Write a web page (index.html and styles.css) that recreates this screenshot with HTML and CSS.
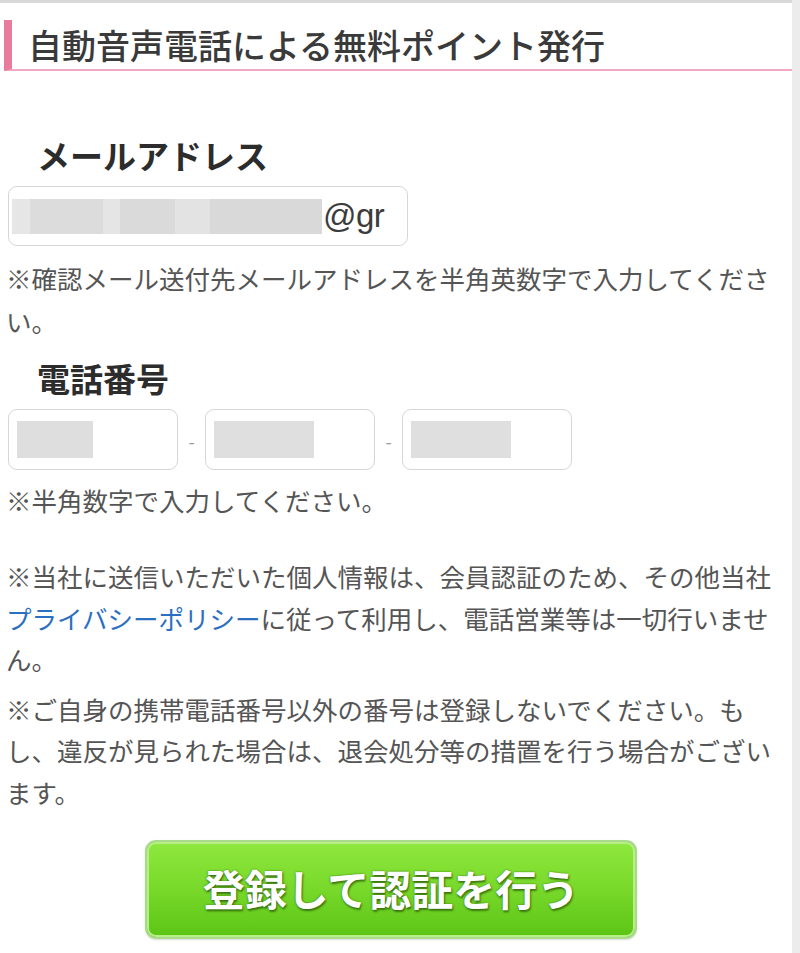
FILE: index.html
```html
<!DOCTYPE html>
<html lang="ja">
<head>
<meta charset="utf-8">
<title>自動音声電話による無料ポイント発行</title>
<link rel="stylesheet" href="styles.css">
</head>
<body>
<div class="page">
  <h2 class="section-title">自動音声電話による無料ポイント発行</h2>
  <div class="form">
    <div class="label">メールアドレス</div>
    <div class="field field-email">
      <span class="blur b1"></span><span class="blur b2"></span><span class="blur b3"></span><span class="blur b4"></span><span class="blur b5"></span><span class="blur b6"></span><span class="at">@gr</span>
    </div>
    <p class="note">※確認メール送付先メールアドレスを半角英数字で入力してください。</p>
    <div class="label label-tel">電話番号</div>
    <div class="tel-row">
      <div class="field field-tel"><span class="blur t1"></span></div>
      <span class="dash">-</span>
      <div class="field field-tel"><span class="blur t2"></span></div>
      <span class="dash">-</span>
      <div class="field field-tel"><span class="blur t2"></span></div>
    </div>
    <p class="note">※半角数字で入力してください。</p>
    <p class="note para first">※当社に送信いただいた個人情報は、会員認証のため、その他当社<a class="link" href="#">プライバシーポリシー</a>に従って利用し、電話営業等は一切行いません。</p>
    <p class="note para">※ご自身の携帯電話番号以外の番号は登録しないでください。もし、違反が見られた場合は、退会処分等の措置を行う場合がございます。</p>
    <div class="btn-wrap">
      <button class="btn" type="button">登録して認証を行う</button>
    </div>
  </div>
</div>
</body>
</html>
```
FILE: styles.css
```css
html, body {
  margin: 0;
  padding: 0;
}
body {
  background: #ececec;
  font-family: "Noto Sans CJK JP", "Noto Sans", "Liberation Sans", sans-serif;
  color: #333;
  width: 800px;
  height: 953px;
  overflow: hidden;
}
.page {
  width: 792px;
  height: 950px;
  background: #fff;
  border-top: 3px solid #d9d9d9;
}
.section-title {
  margin: 17px 0 0 4px;
  height: 47px;
  padding: 2px 0 0 16px;
  border-left: 8px solid #e97c9d;
  border-bottom: 2px solid #f2a9bf;
  font-size: 34px;
  line-height: 45px;
  font-weight: 500;
  color: #3a3a3a;
  letter-spacing: 0;
}
.form {
  padding-left: 6px;
}
.label {
  margin-top: 64px;
  padding-left: 31px;
  font-size: 33px;
  line-height: 40px;
  font-weight: 700;
  color: #2c2c2c;
}
.label-tel {
  margin-top: 16px;
}
.field {
  box-sizing: border-box;
  border: 1.5px solid #d6d6d6;
  border-radius: 9px;
  background: #fff;
  display: flex;
  align-items: center;
}
.field-email {
  margin: 11px 0 0 2px;
  width: 400px;
  height: 60px;
  padding-left: 3px;
}
.blur {
  display: block;
  height: 35px;
  background: #dedede;
}
.b1 { width: 18px; background: #e6e6e6; }
.b2 { width: 73px; background: #dcdcdc; }
.b3 { width: 17px; background: #e5e5e5; }
.b4 { width: 55px; background: #dadada; }
.b5 { width: 35px; background: #e3e3e3; }
.b6 { width: 112px; background: #d9d9d9; }
.at {
  margin-left: 1px;
  font-family: "Liberation Sans", Arial, sans-serif;
  font-size: 33px;
  color: #3c3c3c;
  letter-spacing: -0.5px;
}
.note {
  margin: 10px 0 0 0;
  width: 780px;
  font-size: 25.5px;
  line-height: 43px;
  color: #555;
}
.tel-row {
  margin: 9px 0 0 2px;
  display: flex;
  align-items: center;
}
.field-tel {
  width: 170px;
  height: 61px;
  padding-left: 8px;
}
.t1 { width: 76px; height: 37px; background: #dedede; }
.t2 { width: 100px; height: 37px; background: #dfdfdf; }
.dash {
  width: 27px;
  text-align: center;
  font-size: 18px;
  color: #999;
  line-height: 61px;
  padding-top: 4px;
}
.tel-row + .note {
  margin-top: 6px;
}
.para {
  line-height: 41.5px;
  margin-top: 8px;
}
.para.first {
  margin-top: 34px;
}
.link {
  color: #2b6fc2;
  text-decoration: none;
}
.btn-wrap {
  margin-top: 28px;
  padding-left: 139px;
}
.btn {
  box-sizing: border-box;
  width: 492px;
  height: 99px;
  border: 2px solid #a9d98a;
  border-radius: 11px;
  background: linear-gradient(#8fe83e 0%, #78d92a 50%, #5cc416 100%);
  box-shadow: inset 0 0 0 2px #b6ef86, 0 1px 2px rgba(0,0,0,0.15);
  font-family: "Noto Sans CJK JP", "Noto Sans", sans-serif;
  font-size: 42px;
  font-weight: 700;
  color: #fff;
  text-shadow: 0 0 2px rgba(40,90,10,0.8), 1px 2px 2px rgba(30,70,0,0.6);
  cursor: pointer;
  padding: 0 0 4px 0;
}
```
